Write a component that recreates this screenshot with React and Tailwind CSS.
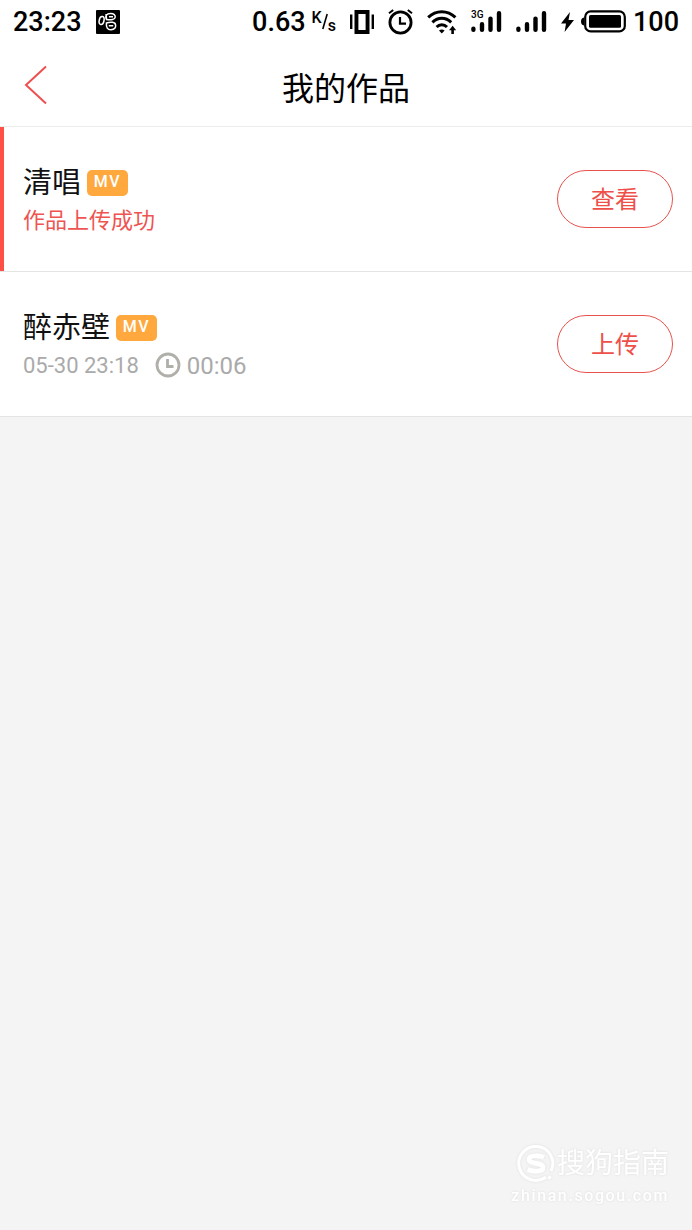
import React from "react";

const works = [
  { id: 1, title: "清唱", status: "作品上传成功", action: "查看", active: true },
  { id: 2, title: "醉赤壁", date: "05-30 23:18", duration: "00:06", action: "上传" },
];

function SignalIcon({ label }) {
  return (
    <svg width="31" height="24" viewBox="0 0 31 24" aria-hidden="true">
      {label && (
        <text x="0" y="8" fontSize="10" fontWeight="500" fontFamily="Roboto, sans-serif">
          {label}
        </text>
      )}
      <g stroke="black" strokeWidth="4.4" strokeLinecap="round">
        <path d="M2.4 18.8v1M11 14.2v5.6M19.5 8.6v11.2M28 3.2v16.6" />
      </g>
    </svg>
  );
}

function StatusBar() {
  return (
    <div className="flex h-11 items-center justify-between px-[13px] text-[27px] leading-8 font-medium text-black">
      <div className="flex items-center gap-[14px]">
        <span>23:23</span>
        <svg width="24" height="24" viewBox="0 0 24 24" aria-hidden="true">
          <rect width="24" height="24" rx="1" />
          <g fill="none" stroke="white" strokeWidth="1.5">
            <ellipse cx="5.6" cy="10.5" rx="2.4" ry="4" transform="rotate(12 5.6 10.5)" />
            <path d="M10.6 9.6C8.6 5.6 10.8 3.6 14.6 3.6C18 3.6 19.4 5 19.2 7.2C19 9.6 15 10.2 10.6 9.6L10 4" />
            <path d="M10.4 13C10 17.6 11.6 20 15 19.8C18.6 19.6 20 17.6 19.6 15C19.2 12 15 11.6 10.4 13z" />
            <path d="M13 6.8h4M12.8 15.8h4.4" />
          </g>
        </svg>
      </div>

      <div className="flex items-center gap-[14px]">
        <div className="flex items-center gap-[6px]">
          <span>0.63</span>
          <span className="flex h-6 text-[16px] leading-4">
            <span className="self-start">K</span>
            <svg width="6" height="20" viewBox="0 0 6 20" className="self-center" aria-hidden="true">
              <path d="M5.2 2L.8 17" stroke="black" strokeWidth="1.6" />
            </svg>
            <span className="self-end">s</span>
          </span>
        </div>

        <svg width="24" height="24" viewBox="0 0 24 24" aria-hidden="true">
          <path d="M4.5 0h15v24h-15zM8.4 4v16h7.2V4z" fillRule="evenodd" />
          <path d="M1.2 4.5v14.5M22.8 4.5v14.5" stroke="black" strokeWidth="2.4" />
        </svg>

        <svg width="25" height="26" viewBox="0 0 25 26" fill="none" stroke="black" aria-hidden="true">
          <circle cx="12.5" cy="13.5" r="10.6" strokeWidth="2.8" />
          <path d="M12 8v6.6h6" strokeWidth="2.2" />
          <path d="M1 4.2L5.2 1M24 4.2L19.8 1" strokeWidth="2" />
        </svg>

        <svg width="30" height="25" viewBox="0 0 30 25" fill="none" stroke="black" aria-hidden="true">
          <path d="M1.2 7.4C9 -.2 20.5 -.2 28.4 7.4" strokeWidth="3" />
          <path d="M5.4 12.4C11 7 18.6 7 24.2 12.4" strokeWidth="3" />
          <path d="M9.6 17C12.6 14 17 14 20 17" strokeWidth="3" />
          <path d="M12 20.4q2.8-2 5.6 0L14.8 23.6z" fill="black" stroke="none" />
          <path d="M25.6 24v-5" strokeWidth="2.6" />
          <path d="M22 20.2l3.6-4.4 3.6 4.4z" fill="black" stroke="none" />
        </svg>

        <SignalIcon label="3G" />
        <SignalIcon />

        <div className="flex items-center gap-[7px]">
          <svg width="13" height="20" viewBox="0 0 13 20" aria-hidden="true">
            <path d="M9 0L0 11.5h5L3.6 20 13 8H7.5z" />
          </svg>
          <svg width="45" height="24" viewBox="0 0 45 24" aria-hidden="true">
            <rect x="4.2" y="1.4" width="39.6" height="20" rx="5.5" fill="none" stroke="black" strokeWidth="2.2" />
            <rect x="8" y="5" width="32" height="12.8" rx="1.5" />
            <path d="M3 7.4C1 7.8 0 9.2 0 11.4s1 3.6 3 4z" />
          </svg>
          <span>100</span>
        </div>
      </div>
    </div>
  );
}

function Header() {
  return (
    <header className="grid h-[83px] grid-cols-[1fr_auto_1fr] items-center border-b border-[#ececec] px-6">
      <button type="button" aria-label="返回" className="justify-self-start">
        <svg width="24" height="40" viewBox="0 0 24 40" fill="none" stroke="#ee4f4f" strokeWidth="2" aria-hidden="true">
          <path d="M22 1.5L2 20l20 18.5" />
        </svg>
      </button>
      <h1 className="pt-2 text-[32px] leading-10 text-black">我的作品</h1>
    </header>
  );
}

function MvBadge() {
  return (
    <span className="flex h-[26px] w-[41px] items-center justify-center rounded-[5px] bg-[#fea83e] pb-[2px] text-[16px] leading-6 font-medium tracking-widest text-white">
      MV
    </span>
  );
}

function WorkRow({ work }) {
  return (
    <li className="flex h-[145px] items-center border-b border-[#e4e4e4] pr-[19px]">
      <span className={`w-1 self-stretch ${work.active ? "bg-[#ff5047]" : "bg-white"}`} />
      <div className="grow pt-[3px] pl-[19px]">
        <div className="flex items-center gap-[6px]">
          <h2 className="text-[29px] leading-10 text-[#111]">{work.title}</h2>
          <MvBadge />
        </div>
        {work.status && (
          <p className="text-[22px] leading-9 text-[#ee5451]">{work.status}</p>
        )}
        {work.date && (
          <div className="flex items-center leading-9 text-[#aaa]">
            <span className="text-[22px]">{work.date}</span>
            <svg
              width="26"
              height="26"
              viewBox="0 0 26 26"
              fill="none"
              stroke="#b0afaa"
              className="mr-[6px] mb-[2px] ml-4"
              aria-hidden="true"
            >
              <circle cx="13" cy="13" r="11" strokeWidth="2.8" />
              <path d="M12.5 7v7.500h6" strokeWidth="2.8" />
            </svg>
            <span className="text-[24px]">{work.duration}</span>
          </div>
        )}
      </div>
      <button
        type="button"
        className="h-[58px] w-[116px] rounded-full border border-[#e8524d] pt-[2px] text-[24px] leading-9 text-[#ee4f49]"
      >
        {work.action}
      </button>
    </li>
  );
}

function Watermark() {
  return (
    <footer className="mt-auto flex flex-col items-end pr-[23px] pb-[22px] text-white">
      <div className="flex items-center gap-[2px] drop-shadow-[0_0_1px_#ddd]">
        <svg width="38" height="38" viewBox="0 0 38 38" fill="none" stroke="white" aria-hidden="true">
          <path d="M29 32A17 17 0 1 1 34 26" strokeWidth="3" />
          <path
            d="M27 12.5C23 10.5 12 9.5 12 14.5C12 19.5 26 17 26 22.5C26 27.5 15 26.5 10.5 24.5"
            strokeWidth="5"
          />
          <path d="M31 33.5l3-2" strokeWidth="3" />
        </svg>
        <span className="text-[28px] leading-10">搜狗指南</span>
      </div>
      <p className="text-[16px] leading-6 font-medium tracking-widest drop-shadow-[0_0_1px_#ddd]">zhinan.sogou.com</p>
    </footer>
  );
}

export default function App() {
  return (
    <div className="flex min-h-screen flex-col bg-[#f4f4f4] font-['Roboto','Noto_Sans_CJK_SC',sans-serif]">
      <div className="bg-white">
        <StatusBar />
        <Header />
        <ul>
          {works.map((work) => (
            <WorkRow key={work.id} work={work} />
          ))}
        </ul>
      </div>
      <Watermark />
    </div>
  );
}
